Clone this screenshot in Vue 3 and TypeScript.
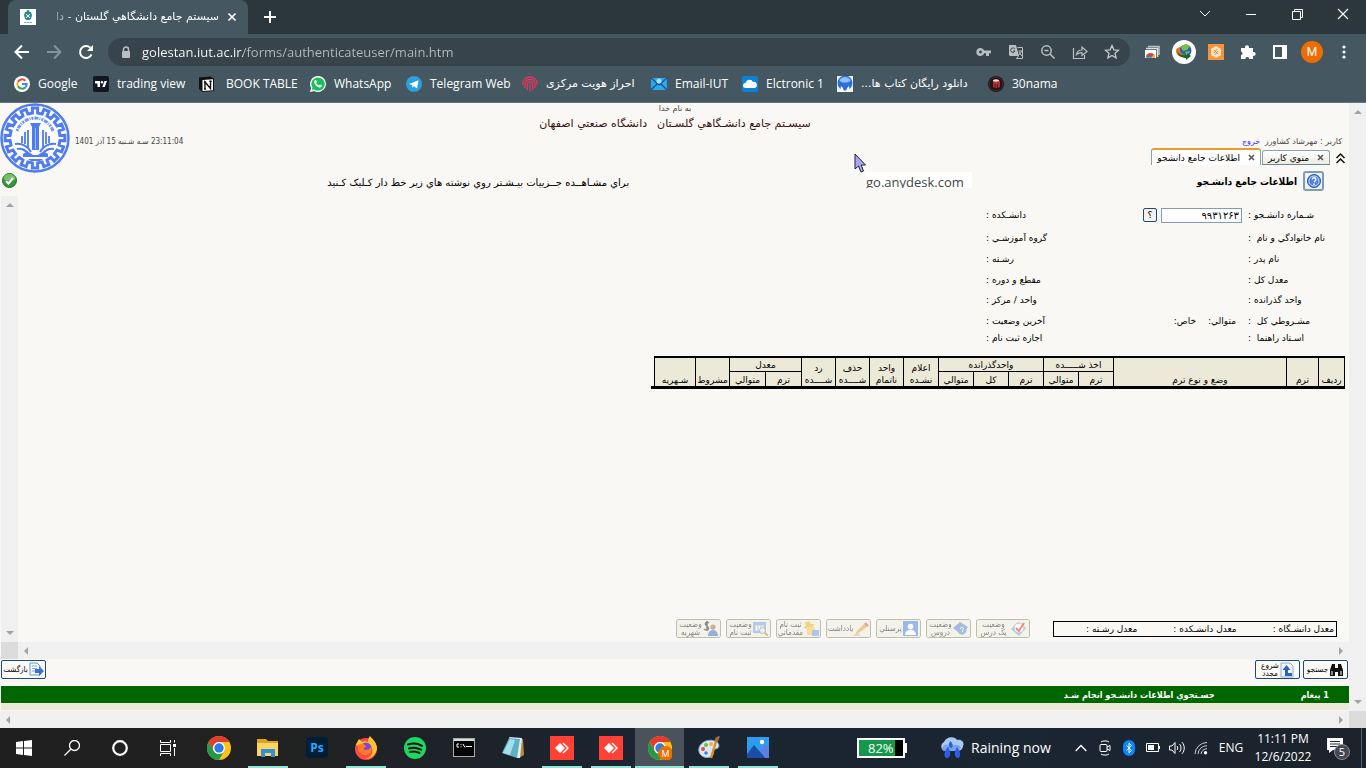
<script setup lang="ts">
import { ref } from 'vue'

interface Bookmark { id: string; label: string; rtl?: boolean }
const bookmarks: Bookmark[] = [
  { id: 'google', label: 'Google' },
  { id: 'trading', label: 'trading view' },
  { id: 'notion', label: 'BOOK TABLE' },
  { id: 'whatsapp', label: 'WhatsApp' },
  { id: 'telegram', label: 'Telegram Web' },
  { id: 'finger', label: 'احراز هویت مرکزی', rtl: true },
  { id: 'mail', label: 'Email-IUT' },
  { id: 'cloud', label: 'Elctronic 1' },
  { id: 'book', label: 'دانلود رایگان کتاب ها...', rtl: true },
  { id: 'nama', label: '30nama' },
]

const address = ref('golestan.iut.ac.ir/forms/authenticateuser/main.htm')
const studentId = ref('۹۹۳۱۲۶۳')

interface Row { a: string; b: string }
const rows: Row[] = [
  { a: 'شـماره دانشـجو :', b: 'دانشـكده :' },
  { a: 'نام خانوادگي و نام  :', b: 'گروه آموزشـي :' },
  { a: 'نام پدر :', b: 'رشـته :' },
  { a: 'معدل كل :', b: 'مقطع و دوره :' },
  { a: 'واحد گذرانده :', b: 'واحد / مركز :' },
  { a: 'مشـروطي كل  :', b: 'آخرين وضعيت :' },
  { a: 'اسـتاد راهنما  :', b: 'اجازه ثبت نام :' },
]

interface Tool { id: string; lines: string[] }
const tools: Tool[] = [
  { id: 'check', lines: ['وضعيت', 'يک درس'] },
  { id: 'question', lines: ['وضعيت', 'دروس'] },
  { id: 'person', lines: ['پرسنلي'] },
  { id: 'pencil', lines: ['يادداشت'] },
  { id: 'star', lines: ['ثبت نام', 'مقدماتي'] },
  { id: 'sheet', lines: ['وضعيت', 'ثبت نام'] },
  { id: 'money', lines: ['وضعيت', 'شهريه'] },
]

interface App { id: string; name: string; open?: boolean; active?: boolean }
const apps: App[] = [
  { id: 'chrome', name: 'Chrome' },
  { id: 'folder', name: 'Explorer', open: true },
  { id: 'ps', name: 'Photoshop' },
  { id: 'firefox', name: 'Firefox', open: true },
  { id: 'spotify', name: 'Spotify' },
  { id: 'cmd', name: 'Terminal' },
  { id: 'notepad', name: 'Notepad' },
  { id: 'anydesk', name: 'AnyDesk', open: true },
  { id: 'anydesk', name: 'AnyDesk', open: true },
  { id: 'chromeM', name: 'Chrome', open: true, active: true },
  { id: 'paint', name: 'Paint', open: true },
  { id: 'photos', name: 'Photos', open: true },
]

/* Outline of a cog wheel centred on (35, 35). */
function gear(teeth: number, outer: number, inner: number): string {
  const pts: string[] = []
  const step = (Math.PI * 2) / teeth
  for (let i = 0; i < teeth; i++) {
    const t = i * step
    const parts: [number, number][] = [[t - step * 0.27, inner], [t - step * 0.23, outer], [t + step * 0.23, outer], [t + step * 0.27, inner]]
    for (const [ang, r] of parts) {
      pts.push(`${(35 + Math.sin(ang) * r).toFixed(1)} ${(35 - Math.cos(ang) * r).toFixed(1)}`)
    }
  }
  return `M${pts.join('L')}Z`
}
const gearPath = gear(16, 30, 25)
</script>

<template>
  <div class="screen">
    <header class="chrome">
      <div class="strip">
        <div class="tab">
          <svg class="fav" viewBox="0 0 16 16"><rect width="16" height="16" fill="#fff" /><path d="M5 3h6l1 3-1 4-3 2-3-2-1-4z" fill="#2a8c93" /><path d="M6 5l2 2 2-2M6 9l2-2 2 2M5 11l3 1 3-1" stroke="#fff" fill="none" /><path d="M4 13.500h8" stroke="#7fbcc0" /><circle cx="8" cy="2.500" r="1.500" fill="#2a8c93" /></svg>
          <span class="tab-title" dir="rtl">سيستم جامع دانشگاهي گلستان - دا</span>
          <button class="plain" aria-label="Close tab"><svg width="10" height="10" viewBox="0 0 10 10"><path d="M1.500 1.500l7 7M8.500 1.500l-7 7" stroke="#fff" stroke-width="1.700" /></svg></button>
        </div>
        <button class="plain new" aria-label="New tab"><svg width="12" height="12" viewBox="0 0 12 12"><path d="M6 0v12M0 6h12" stroke="#fff" stroke-width="2" /></svg></button>
        <div class="win">
          <button class="plain" aria-label="Search tabs"><svg width="12" height="8" viewBox="0 0 12 8"><path d="M1 1l5 5 5-5" stroke="#fff" fill="none" /></svg></button>
          <button class="plain" aria-label="Minimize"><svg width="10" height="10" viewBox="0 0 10 10"><path d="M0 5.500h10" stroke="#fff" /></svg></button>
          <button class="plain" aria-label="Restore"><svg width="11" height="11" viewBox="0 0 11 11"><path d="M.5 2.500h8v8h-8zM2.500 2.500v-2h8v8h-2" stroke="#fff" fill="none" /></svg></button>
          <button class="plain" aria-label="Close"><svg width="12" height="12" viewBox="0 0 12 12"><path d="M1 1l10 10M11 1L1 11" stroke="#fff" stroke-width="1.200" /></svg></button>
        </div>
      </div>
      <div class="toolbar">
        <button class="plain" aria-label="Back"><svg width="16" height="16" viewBox="0 0 16 16"><path d="M15 8H2M8 1.500L1.500 8 8 14.500" stroke="#fff" stroke-width="2" fill="none" /></svg></button>
        <button class="plain" aria-label="Forward"><svg width="16" height="16" viewBox="0 0 16 16"><path d="M1 8h13M8 1.500L14.500 8 8 14.500" stroke="#899499" stroke-width="2" fill="none" /></svg></button>
        <button class="plain" aria-label="Reload"><svg width="16" height="16" viewBox="0 0 16 16"><path d="M13.500 10.500A6 6 0 1 1 12.300 3.800" stroke="#fff" stroke-width="2" fill="none" /><path d="M15 1v6H9z" fill="#fff" /></svg></button>
        <div class="omni">
          <svg width="10" height="13" viewBox="0 0 10 13"><rect x="1" y="5" width="8" height="7" rx="1" fill="#b9bec1" /><path d="M2.500 5V3.500a2.500 2.500 0 0 1 5 0V5" stroke="#b9bec1" stroke-width="1.500" fill="none" /></svg>
          <input v-model="address" class="url" aria-label="Address" spellcheck="false" />
          <button class="plain" aria-label="Passwords"><svg width="16" height="16" viewBox="0 0 16 16"><path d="M4.500 4a4 4 0 1 0 3.700 5.200H10V12h3V9.200h2V6.500H8.200A4 4 0 0 0 4.500 4zm0 2.500a1.400 1.400 0 1 1 0 2.900 1.400 1.400 0 0 1 0-2.900z" fill="#b9bec1" fill-rule="evenodd" /></svg></button>
          <button class="plain" aria-label="Translate"><svg width="16" height="16" viewBox="0 0 16 16"><path d="M1 1h7l3 11H2l-1-1z" fill="#b9bec1" /><path d="M9.500 3.500h5v11H8.500l2-2.500" stroke="#b9bec1" fill="none" /><path d="M6.800 5A2.200 2.200 0 1 0 7 7H5" stroke="#38444b" fill="none" /><path d="M10.500 7h4M11 11l3-4M11 8l3 4" stroke="#b9bec1" fill="none" /></svg></button>
          <button class="plain" aria-label="Zoom"><svg width="16" height="16" viewBox="0 0 16 16"><circle cx="6.500" cy="6.500" r="4.700" stroke="#b9bec1" stroke-width="1.500" fill="none" /><path d="M10 10l4.500 4.500M4.500 6.500h4" stroke="#b9bec1" stroke-width="1.500" /></svg></button>
          <button class="plain" aria-label="Share"><svg width="16" height="16" viewBox="0 0 16 16"><path d="M1.500 4v10.500h11V11M4.500 10.500c.5-3 2.500-4.500 5.500-4.500V3l5 4.500-5 4V8.700c-2.500 0-4 .3-5.500 1.800z" stroke="#b9bec1" stroke-width="1.200" fill="none" /></svg></button>
          <button class="plain" aria-label="Bookmark"><svg width="16" height="16" viewBox="0 0 16 16"><path d="M8 1.500l1.900 4.300 4.700.4-3.600 3.100 1.100 4.600L8 11.400l-4.100 2.500L5 9.300 1.400 6.200l4.700-.4z" stroke="#c4c9cb" stroke-width="1.300" fill="none" /></svg></button>
        </div>
        <div class="exts">
          <button class="plain" aria-label="Tabs extension"><svg width="16" height="16" viewBox="0 0 16 16"><path d="M4 2.500h11V11" stroke="#bfc4c6" stroke-width="1.500" fill="none" /><path d="M2 4.500h11.500V13" stroke="#dedede" stroke-width="1.500" fill="none" /><rect x="1" y="6" width="11" height="8" fill="#fff" /><path d="M2 13.500a4.500 4.500 0 0 1 9 0z" fill="#e33b2e" /><path d="M2 13.500a4.500 4.500 0 0 1 1.200-3.100L5.500 13.500z" fill="#2c9f4b" /><path d="M11 13.500a4.500 4.500 0 0 0-1.200-3.100L7.500 13.500z" fill="#f7c52c" /><path d="M4.600 13.500a1.900 1.900 0 0 1 3.800 0z" fill="#3c79e6" /></svg></button>
          <button class="plain" aria-label="Download manager"><svg width="24" height="24" viewBox="0 0 24 24"><circle cx="12" cy="12" r="12" fill="#fff" /><circle cx="13.500" cy="10.500" r="6" fill="#2c62b8" /><path d="M9 7c3-4 7-3 9-1l-3 4-4 1zM13 12l5-1-3 5z" fill="#7bc043" /><path d="M4 11c0-3 3-4 5-4-3 3 0 7 4 8l-2 2c-4 0-7-3-7-6z" fill="#e2711d" /><path d="M5 11c2 4 6 5 10 4v-2l4 3-5 4v-2c-4 0-8-2-9-7z" fill="#176822" /></svg></button>
          <button class="plain" aria-label="Wallet"><svg width="16" height="16" viewBox="0 0 16 16"><rect width="16" height="16" fill="#f79236" /><path d="M8 2l5 3v6l-5 3-5-3V5z" fill="#ffe7cd" /><path d="M6 9l3-4M7 11l3-4M6 6l4 4" stroke="#f08a30" fill="none" /></svg></button>
          <button class="plain" aria-label="Extensions"><svg width="16" height="16" viewBox="0 0 16 16"><path d="M1 4h4.200a2 2 0 1 1 3.600 0H13v4a2 2 0 1 1 0 3.800V15H9.300a2 2 0 0 0-4 0H1v-3.700a2 2 0 0 0 0-3.900z" fill="#fff" /></svg></button>
          <button class="plain" aria-label="Side panel"><svg width="14" height="14" viewBox="0 0 14 14"><path d="M1 1h12v12H1z" stroke="#fff" stroke-width="2" fill="none" /><path d="M9 1h5v12H9z" fill="#fff" /></svg></button>
          <button class="plain" aria-label="Profile"><span class="avatar">M</span></button>
          <button class="plain" aria-label="Menu"><svg width="4" height="16" viewBox="0 0 4 16"><circle cx="2" cy="3" r="1.600" fill="#fff" /><circle cx="2" cy="8" r="1.600" fill="#fff" /><circle cx="2" cy="13" r="1.600" fill="#fff" /></svg></button>
        </div>
      </div>
      <nav class="marks">
        <a v-for="m in bookmarks" :key="m.id" href="#">
          <svg width="16" height="16" viewBox="0 0 16 16">
            <g v-if="m.id === 'google'"><circle cx="8" cy="8" r="8" fill="#fff" /><g fill="none" stroke-width="2"><path d="M3.900 5.800A4.700 4.700 0 0 1 11.300 4.700" stroke="#ea4335" /><path d="M3.900 10.200a4.700 4.700 0 0 1 0-4.400" stroke="#fbbc05" /><path d="M11.200 11.400a4.700 4.700 0 0 1-7.300-1.200" stroke="#34a853" /><path d="M8 8h4.700a4.700 4.700 0 0 1-1.500 3.400" stroke="#4285f4" /></g></g>
            <g v-else-if="m.id === 'trading'"><rect width="16" height="16" rx="2" fill="#131722" /><path d="M2 5h5v6H4.500V7.500H2zM11.500 5H14l-2.300 6H9.300z" fill="#fff" /><circle cx="9" cy="6.200" r="1.200" fill="#fff" /></g>
            <g v-else-if="m.id === 'notion'"><path d="M0 1.500L11.500 .5l3.500 2V15L3.500 16 0 13z" fill="#111" /><path d="M3.500 4l10.500-.7V14.300L3.500 15z" fill="#fff" /><path d="M6 13V6l5.500 6.500V5M5 6h2M10.300 5.200h2.400M5 13h2" stroke="#111" stroke-width="1.400" fill="none" /></g>
            <g v-else-if="m.id === 'whatsapp'"><path d="M8 0a8 8 0 0 0-6.900 12L0 16l4.100-1A8 8 0 1 0 8 0z" fill="#fff" /><path d="M8 1.400a6.600 6.600 0 0 0-5.500 10.200L1.900 14l2.500-.6A6.600 6.600 0 1 0 8 1.400z" fill="#16c15b" /><path d="M5 4.300c1-.7 1.400.2 1.900 1.500L6.200 7c.6 1.300 1.500 2 2.800 2.500l1-1 2 1c0 1.200-1.300 2.200-2.800 1.900C6.500 10.700 4.700 8.700 4.200 6.500 4 5.500 4.500 4.700 5 4.300z" fill="#fff" /></g>
            <g v-else-if="m.id === 'telegram'"><circle cx="8" cy="8" r="8" fill="#2ba0dc" /><path d="M3 8l9.500-3.800L11 12.500 8 10.300l-1.500 1.500-.4-2.800z" fill="#fff" /></g>
            <g v-else-if="m.id === 'finger'" fill="none" stroke="#e8345f" stroke-width="1.300"><path d="M1 9C0 4 4 1 8 1s8 3 7 8M3 12V8.500C3 5.500 5 3.500 8 3.500s5 2 5 5V12M5.300 14V9c0-2 1-3.200 2.700-3.200S10.700 7 10.700 9v5M8 8v7.500" /></g>
            <g v-else-if="m.id === 'mail'"><rect y="2" width="16" height="12" fill="#2aa9f0" /><path d="M0 2l8 7 8-7M0 14l6-6M16 14l-6-6" stroke="#16538a" stroke-width="1.300" fill="none" /><circle cx="8" cy="5" r="2.500" fill="#b7ddf5" /></g>
            <g v-else-if="m.id === 'cloud'"><rect width="16" height="16" rx="2" fill="#0b82d6" /><path d="M3.500 12a2.500 2.500 0 0 1 0-5A4 4 0 0 1 11 6a3 3 0 0 1 1.500 6z" fill="#fff" /></g>
            <g v-else-if="m.id === 'book'"><rect width="16" height="16" fill="#e9f2fc" /><circle cx="8" cy="7" r="7.500" fill="#2c6fd8" /><path d="M2.500 4c3-4 8-4 11 0 0 3-10 4-11 0z" fill="#8ec2fa" /><path d="M3 16l1-6 2 2 1 4zM13 16l-1-6-2 2-1 4z" fill="#fff" /></g>
            <g v-else><circle cx="8" cy="8" r="8" fill="#17181a" /><circle cx="8" cy="8" r="6.800" fill="none" stroke="#5a2226" /><path d="M5 5c2-1.500 5-1.500 7 0v6c-2 1.500-5 1.500-7 0z" fill="#b82d35" /><path d="M5 5c2 1 4 1 6 0V4C9 3 7 3 5 4z" fill="#f4d9d9" /><path d="M7 8v4M9.500 8v4" stroke="#5e1218" /></g>
          </svg>
          <span :dir="m.rtl ? 'rtl' : 'ltr'" :class="{ fa: m.rtl }">{{ m.label }}</span>
        </a>
      </nav>
    </header>

    <div class="viewport">
      <main class="page" dir="rtl">
        <div class="top">
          <div class="user">کاربر : مهرشاد كشاورز <a href="#">خروج</a></div>
          <div class="heads">
            <p class="small">به نام خدا</p>
            <p class="head"><span>سيسـتم جامع دانشـگاهي گلسـتان</span><span>دانشگاه صنعتي اصفهان</span></p>
          </div>
          <div class="date">23:11:04 سـه شـنبه 15 آذر 1401</div>
          <svg class="logo" viewBox="0 0 70 70">
            <circle cx="35" cy="35" r="33.500" fill="#fff" stroke="#4f7cf0" stroke-width="2.500" />
            <path :d="gearPath" fill="#fff" stroke="#4f7cf0" stroke-width="3" />
            <path d="M17 28A19 19 0 0 1 53 28" fill="none" stroke="#6f95f6" stroke-width="3" stroke-dasharray="2 1 4 1 1 1" />
            <path d="M30 20h11l-2 4v23h-7V24z" fill="#4f7cf0" />
            <path d="M35.500 25v21" stroke="#a9c1fb" />
            <path d="M28 27v18M25 29v12M22 33v7M43 27v18M46 29v12M49 33v7" stroke="#5c87f4" stroke-width="2" />
            <path d="M15 41c8-1 13 3 16 8M17 46c6-1 9 2 12 5M56 41c-8-1-13 3-16 8M54 46c-6-1-9 2-12 5" stroke="#4f7cf0" stroke-width="2" fill="none" />
            <path d="M23 51c3-3 7-2 10 1h5c3-3 7-4 10-1v3H23zM28 56h15l-3 2h-9z" fill="#4f7cf0" />
          </svg>
          <div class="tabs">
            <button class="plain up" aria-label="Collapse"><svg width="11" height="12" viewBox="0 0 11 12"><path d="M1.500 6l4-4 4 4M1.500 11l4-4 4 4" stroke="#111" stroke-width="1.500" fill="none" /></svg></button>
            <button class="ptab"><svg width="7" height="7" viewBox="0 0 7 7"><path d="M1 1l5 5M6 1L1 6" stroke="#555" stroke-width="1.500" /></svg>منوي كاربر</button>
            <button class="ptab on"><svg width="7" height="7" viewBox="0 0 7 7"><path d="M1 1l5 5M6 1L1 6" stroke="#555" stroke-width="1.500" /></svg>اطلاعات جامع دانشجو</button>
          </div>
          <div class="titlebar">
            <div class="title">
              <button class="help" aria-label="Help"><svg width="14" height="14" viewBox="0 0 14 14"><circle cx="7" cy="7" r="6.500" fill="#4c7fdd" stroke="#2257b4" /><circle cx="7" cy="7" r="5" fill="none" stroke="#c9dcfa" /><path d="M5.300 5.500a1.800 1.800 0 1 1 2.500 1.700L7 8.300M7 9.500V11" stroke="#fff" stroke-width="1.400" fill="none" /></svg></button>
              <h1>اطلاعات جامع دانشـجو</h1>
            </div>
            <p class="hint">براي مشـاهــده جــزييات بيـشـتر روي نوشته هاي زير خط دار كـليک كـنيد</p>
            <svg class="ok" width="15" height="15" viewBox="0 0 15 15"><circle cx="7.500" cy="7.500" r="7" fill="#399339" stroke="#23702a" /><path d="M1.500 6a6 5 0 0 1 12 0c-3 2-8 2-12 0z" fill="#79bf70" /><path d="M4 8l2.500 2.500L11 5" stroke="#fff" stroke-width="2" fill="none" /></svg>
          </div>
        </div>

        <div class="frame">
          <section class="content">
            <div class="form">
              <template v-for="(r, i) in rows" :key="i">
                <label v-if="i === 0" for="sid">{{ r.a }}</label>
                <span v-else class="lab">{{ r.a }}</span>
                <div v-if="i === 0" class="val">
                  <input id="sid" v-model="studentId" />
                  <button class="q" aria-label="Lookup">؟</button>
                </div>
                <div v-else-if="i === 5" class="val sub"><span>متوالي:</span><span>خاص:</span></div>
                <div v-else></div>
                <span class="lab">{{ r.b }}</span>
              </template>
            </div>
            <div class="tablebox">
              <table>
                <colgroup><col class="c26" /><col class="c32" /><col class="c174" /><col class="c35" span="5" /><col class="c35" /><col class="c34" /><col class="c34" /><col class="c34" /><col class="c36" span="2" /><col class="c34" /><col class="c41" /></colgroup>
                <thead>
                  <tr>
                    <th rowspan="2">رديف</th>
                    <th rowspan="2">ترم</th>
                    <th rowspan="2">وضع و نوع ترم</th>
                    <th colspan="2">اخذ شـــــده</th>
                    <th colspan="3">واحدگذرانده</th>
                    <th rowspan="2">اعلام<br />نشـده</th>
                    <th rowspan="2">واحد<br />ناتمام</th>
                    <th rowspan="2">حذف<br />شــــده</th>
                    <th rowspan="2">رد<br />شــــده</th>
                    <th colspan="2">معدل</th>
                    <th rowspan="2">مشروط</th>
                    <th rowspan="2">شـهريه</th>
                  </tr>
                  <tr class="low"><th>ترم</th><th>متوالي</th><th>ترم</th><th>كل</th><th>متوالي</th><th>ترم</th><th>متوالي</th></tr>
                </thead>
              </table>
            </div>
            <div class="foot">
              <div class="avg"><span>معدل دانشـگاه :</span><span>معدل دانشـكده :</span><span>معدل رشـته :</span></div>
              <div class="tools">
                <button v-for="t in tools" :key="t.id" class="tool" disabled>
                  <svg width="15" height="15" viewBox="0 0 15 15">
                    <g v-if="t.id === 'check'"><path d="M0 8l7-7 8 6-7 8z" fill="#8ca0d8" /><circle cx="8" cy="7" r="5" fill="#fff" stroke="#99a" /><path d="M5 7l3 3 5-8" stroke="#e23b20" stroke-width="2" fill="none" /></g>
                    <g v-else-if="t.id === 'question'"><path d="M0 7l7-6 8 5-6 8z" fill="#6884cf" /><circle cx="9" cy="9" r="4.500" fill="#5f8ce0" /><path d="M7.500 8a1.500 1.500 0 1 1 2 1.200V11" stroke="#fff" fill="none" /></g>
                    <g v-else-if="t.id === 'person'"><rect width="15" height="15" fill="#4f87e0" /><circle cx="7.500" cy="5.500" r="2.800" fill="#fff" /><path d="M2 14c0-7 11-7 11 0z" fill="#fff" /></g>
                    <g v-else-if="t.id === 'pencil'"><path d="M1 14l2-4 8-8 3 3-9 7z" fill="#e0a64a" /><path d="M11 2l3 3" stroke="#c55" stroke-width="2" /><path d="M0 14h6" stroke="#999" /></g>
                    <g v-else-if="t.id === 'star'"><path d="M5 0l2 3 3 0-1 3 2 3-4 0-2 3-2-4-3-1 2-3-1-3 3 0z" fill="#efb223" /><path d="M3 6h8v8H3z" fill="#f2cd55" /><path d="M8 9h7v6H8z" fill="#6f9de3" /></g>
                    <g v-else-if="t.id === 'sheet'"><path d="M0 1h13v11H0z" fill="#7ba6e6" /><path d="M2 4h9v6H2zM5 4v6M8 4v6" fill="#fff" stroke="#7ba6e6" /><circle cx="9.500" cy="9.500" r="3" fill="#dfeafc" stroke="#888" /><path d="M12 12l3 3" stroke="#cf8c30" stroke-width="2" /></g>
                    <g v-else><path d="M6 2C3 0 1 3 4 5s1 6-3 3M4 0v10" stroke="#333" stroke-width="1.500" fill="none" /><circle cx="10" cy="6" r="2.600" fill="#a67144" /><path d="M5 15c0-8 10-8 10 0z" fill="#4575cc" /></g>
                  </svg>
                  <span><template v-for="(l, k) in t.lines" :key="k"><br v-if="k" />{{ l }}</template></span>
                </button>
              </div>
            </div>
          </section>
          <div class="vbar"><svg width="8" height="4" viewBox="0 0 8 4"><path d="M0 4l4-4 4 4z" fill="#a3a3a3" /></svg><svg width="8" height="4" viewBox="0 0 8 4"><path d="M0 0l4 4 4-4z" fill="#a3a3a3" /></svg></div>
          <div class="hbar"><svg width="4" height="8" viewBox="0 0 4 8"><path d="M0 0l4 4-4 4z" fill="#a3a3a3" /></svg><svg width="4" height="8" viewBox="0 0 4 8"><path d="M4 0L0 4l4 4z" fill="#a3a3a3" /></svg></div>
          <div class="corner"></div>
        </div>

        <div class="actions">
          <button class="act"><svg width="15" height="16" viewBox="0 0 15 16"><path d="M3 2h3v4h3V2h3l2 6v6H9v-4H6v4H1V8z" fill="#111" /><path d="M3 9v4M12 9v4" stroke="#fff" /></svg><span>جستجو</span></button>
          <button class="act"><svg width="14" height="16" viewBox="0 0 14 16"><path d="M1 1h9l3 3v11H1z" fill="#f2f7ff" stroke="#8fa9d4" /><path d="M5 14V8H2.500L6.500 3l4 5H8v3h4v3z" fill="#2b62c4" /></svg><span>شروع<br />مجدد</span></button>
          <button class="act back"><svg width="15" height="15" viewBox="0 0 15 15"><path d="M1 1h7l3 3v9H1z" fill="#f4f8ff" stroke="#6d93d8" /><path d="M3 4h5M3 6.500h5M3 9h3" stroke="#8aa9e0" /><path d="M6 7h4V4l5 5-5 5v-3H6z" fill="#3971d4" /></svg><span>بازگشت</span></button>
        </div>
        <div class="status"><b>1 پيغام</b><b>جسـتجوي اطلاعات دانشـجو انجام شـد</b></div>
        <div class="strap"></div>

        <div class="anydesk" dir="ltr">go.anydesk.com</div>
        <svg class="cursor" width="13" height="20" viewBox="0 0 13 20"><path d="M1 1v15l3.500-3 2.500 6 2.500-1L7.200 12H11.500z" fill="#a9a5f5" stroke="#22223a" /></svg>
      </main>
      <div class="vbar outer"><svg width="8" height="4" viewBox="0 0 8 4"><path d="M0 4l4-4 4 4z" fill="#a3a3a3" /></svg><svg width="8" height="4" viewBox="0 0 8 4"><path d="M0 0l4 4 4-4z" fill="#a3a3a3" /></svg></div>
      <div class="hbar outer"><svg width="4" height="8" viewBox="0 0 4 8"><path d="M4 0L0 4l4 4z" fill="#a3a3a3" /></svg><svg width="4" height="8" viewBox="0 0 4 8"><path d="M0 0l4 4-4 4z" fill="#a3a3a3" /></svg></div>
      <div class="corner"></div>
    </div>

    <footer class="taskbar">
      <button class="plain sys" aria-label="Start"><svg width="16" height="16" viewBox="0 0 16 16"><path d="M0 2l7-1v6.500H0zM8 1l8-1v7.500H8zM0 8.500h7V15l-7-1zM8 8.500h8V16l-8-1z" fill="#fff" /></svg></button>
      <button class="plain sys" aria-label="Search"><svg width="16" height="16" viewBox="0 0 16 16"><circle cx="10.500" cy="5.500" r="5" stroke="#fff" stroke-width="1.300" fill="none" /><path d="M7 9L.5 15.500" stroke="#fff" stroke-width="1.300" /></svg></button>
      <button class="plain sys" aria-label="Assistant"><svg width="16" height="16" viewBox="0 0 16 16"><circle cx="8" cy="8" r="6.800" stroke="#fff" stroke-width="2.200" fill="none" /></svg></button>
      <button class="plain sys" aria-label="Task view"><svg width="16" height="16" viewBox="0 0 16 16"><path d="M.5 0v2.500h10V0M.5 16v-2.500h10V16M.5 4.500h10v7H.5zM14.500 0v2.500M14.500 8v8" stroke="#fff" fill="none" /><path d="M13 4h3v3h-3z" fill="#fff" /></svg></button>
      <div class="apps">
        <button v-for="(a, i) in apps" :key="i" class="plain app" :class="{ open: a.open, active: a.active }" :aria-label="a.name">
          <svg width="24" height="24" viewBox="0 0 24 24">
            <g v-if="a.id === 'chrome' || a.id === 'chromeM'">
              <circle cx="12" cy="12" r="12" fill="#fbc116" /><path d="M1.600 6A12 12 0 0 1 22.400 6H12a6 6 0 0 0-5.200 9z" fill="#e33b2e" /><path d="M1.600 6a12 12 0 0 0 10.400 18l5.200-9a6 6 0 0 1-10.400 0z" fill="#229a48" /><circle cx="12" cy="12" r="6" fill="#fff" /><circle cx="12" cy="12" r="4.700" fill="#2c7cf0" />
              <g v-if="a.id === 'chromeM'"><circle cx="17.500" cy="17.500" r="7.500" fill="#ef6c00" /><text x="17.500" y="21" text-anchor="middle" font-size="9" fill="#fff" font-family="Roboto, sans-serif">M</text></g>
            </g>
            <g v-else-if="a.id === 'folder'"><path d="M1 3h9l2 2h10v4H1z" fill="#e0a11b" /><path d="M1 7h21v13H1z" fill="#fcd462" /><path d="M5 13h14v8h-4v-4H9v4H5z" fill="#2f8fd8" /></g>
            <g v-else-if="a.id === 'ps'"><rect x="1" y="1" width="22" height="21" rx="4" fill="#001e36" /><text x="12" y="16" text-anchor="middle" font-size="12" font-weight="700" fill="#31a8ff" font-family="Open Sans, sans-serif">Ps</text></g>
            <g v-else-if="a.id === 'firefox'"><circle cx="12" cy="13" r="11" fill="#ff4a44" /><path d="M2 9c1-3 2-4 3-6l3 3c2-1 4-1 6 0 0-3 1-5 2-6 2 3 7 6 7 13-2 8-8 10-11 10 6-2 8-8 5-12-3-3-9-3-11 0z" fill="#ffc32e" /><circle cx="12" cy="12" r="5.500" fill="#8146d8" /><path d="M4 9c4-3 8 0 8 2-3 0-3 3 0 3 2 0 4-1 5-3 2 5-3 9-7 8-4-1-7-5-6-10z" fill="#ff7a2d" /></g>
            <g v-else-if="a.id === 'spotify'"><circle cx="12" cy="12" r="11" fill="#1ed760" /><path d="M5 8.500c5-1.500 10-1 14 1.300M6 12.500c4-1.200 8-.8 12 1.200M7 16c3-1 6.500-.6 9.500 1" stroke="#111" stroke-width="2" stroke-linecap="round" fill="none" /></g>
            <g v-else-if="a.id === 'cmd'"><rect x="1.500" y="2.500" width="21" height="18" fill="#050505" stroke="#a9adb0" /><path d="M2 4h20" stroke="#d8dadb" stroke-width="2" /><path d="M7 8H5v3h2M9 8v0.800M9 10.500v.8M11 8l2 3.500M14 10.500h6" stroke="#fff" fill="none" /></g>
            <g v-else-if="a.id === 'notepad'"><path d="M9 2l13 1 1 16-5 3z" fill="#b88a3e" /><path d="M8 1l13 1-2 20-3 0z" fill="#e4eef0" /><path d="M8 2l11 1-3 19L1 17z" fill="#5db1c6" /><path d="M9 3l5 1-5 15-7-2z" fill="#a5dde8" /></g>
            <g v-else-if="a.id === 'anydesk'"><rect width="24" height="24" fill="#ff4136" /><path d="M5 12l5-5 5 5-5 5zM12.500 7.500l1-1L19 12l-5.500 5.500-1-1L17 12z" fill="#fff" /></g>
            <g v-else-if="a.id === 'paint'"><path d="M2 12C4 5 13 2 20 6c4 4 1 7-2 7-3 1 0 4-3 7-5 4-15 0-13-8z" fill="#d9eaf6" stroke="#7fa9c9" /><circle cx="6" cy="13" r="2" fill="#e8473a" /><circle cx="9" cy="9" r="2" fill="#73b944" /><circle cx="14" cy="8" r="2" fill="#f1b32b" /><circle cx="9" cy="17" r="1.800" fill="#3c83d8" /><path d="M20 2l-6 20" stroke="#e08a2a" stroke-width="2.500" /><path d="M19 1l4-1-2 6-3-1z" fill="#9c6b40" /></g>
            <g v-else><rect x="1" y="1" width="22" height="21" fill="#2e9bef" /><path d="M1 18l7-9 8 9 3-4 4 3v5H1z" fill="#1a4fa8" /><path d="M14 15l5-6 4 3v10h-4z" fill="#5e7fe0" /><circle cx="16" cy="6" r="2.200" fill="#fff" /></g>
          </svg>
        </button>
      </div>
      <div class="tray">
        <div class="meter"><span>82%</span></div>
        <button class="plain weather"><svg width="25" height="22" viewBox="0 0 25 22"><path d="M5 14a5 5 0 0 1 0-9C7-1 16-1 18 3c4-1 8 2 6 6 0 3-3 5-5 5z" fill="#a9c9f5" /><path d="M3 11c3-5 8-4 9-1 3-3 8-3 10 1l-3 3H5z" fill="#7aa2ea" /><path d="M9 10c3 4 3 11-1 11s-3-7 1-11zM18 10c4 5 4 11 1 11s-5-5-1-11zM11 4c4 3 3 7 1 7s-3-3-1-7z" fill="#2c5ee8" /></svg>Raining now</button>
        <button class="plain ic" aria-label="Hidden icons"><svg width="12" height="8" viewBox="0 0 12 8"><path d="M.7 7L6 1.500 11.300 7" stroke="#fff" stroke-width="1.300" fill="none" /></svg></button>
        <button class="plain ic" aria-label="Meet now"><svg width="12" height="16" viewBox="0 0 12 16"><rect x="1" y="4.500" width="7" height="7" rx="1" stroke="#fff" fill="none" /><path d="M8 7l3-1.500v5L8 9M2 2c2-1.500 6-1.500 8 0M2 14c2 1.500 6 1.500 8 0" stroke="#fff" fill="none" /></svg></button>
        <button class="plain ic" aria-label="Bluetooth"><svg width="12" height="16" viewBox="0 0 12 16"><rect width="12" height="16" rx="6" fill="#0a84ff" /><path d="M3.500 5.500l5 5L6 13V3l2.500 2.500-5 5" stroke="#fff" fill="none" /></svg></button>
        <button class="plain ic" aria-label="Battery"><svg width="15" height="10" viewBox="0 0 15 10"><path d="M.5.5h12v8H.5zM13.500 3v3" stroke="#fff" fill="none" /><path d="M2 2h6v5H2z" fill="#fff" /></svg></button>
        <button class="plain ic" aria-label="Volume"><svg width="17" height="14" viewBox="0 0 17 14"><path d="M.5 5H3l3-3.500v11L3 9H.5zM8 5c1 1.200 1 2.800 0 4M10.500 3c2 2.300 2 5.700 0 8M13 1.200c3 3.300 3 8.300 0 11.600" stroke="#fff" fill="none" /></svg></button>
        <button class="plain ic" aria-label="Network"><svg width="14" height="14" viewBox="0 0 14 14"><path d="M1 13A12 12 0 0 1 13 1.500M4 13a9 9 0 0 1 9-8.300M7 13a6 6 0 0 1 6-5.300" stroke="#ccd0d4" fill="none" /><circle cx="11.500" cy="11.800" r="1.700" fill="#fff" /></svg></button>
        <span class="lang">ENG</span>
        <div class="clock"><span>11:11 PM</span><span>12/6/2022</span></div>
        <button class="plain note" aria-label="Notifications"><svg width="26" height="26" viewBox="0 0 26 26"><path d="M2 3h16v12H8l-4 3v-3H2z" fill="#fff" /><path d="M5 6.500h10M5 9h10M5 11.500h7" stroke="#222b33" /><circle cx="17" cy="17" r="7.500" fill="#444a50" stroke="#8a8f94" /><text x="17" y="21" text-anchor="middle" font-size="11" fill="#fff" font-family="Open Sans, sans-serif">5</text></svg></button>
      </div>
    </footer>
  </div>
</template>

<style>
body { margin: 0; background: #f9f8f4; }
</style>

<style scoped>
.screen { min-height: 100vh; display: flex; flex-direction: column; overflow: hidden; font: 12px/16px "Open Sans", "DejaVu Sans", sans-serif; color: #fff; }
.screen * { box-sizing: border-box; }
svg { display: block; flex: none; }
p, h1 { margin: 0; }
button { font: inherit; color: inherit; padding: 0; cursor: default; }
.plain { border: 0; background: none; display: flex; align-items: center; justify-content: center; }
a { color: inherit; text-decoration: none; }

.chrome { background: #455760; border-bottom: 1px solid #66757d; }
.strip { height: 34px; background: #2c363d; display: flex; align-items: stretch; padding-left: 8px; }
.tab { width: 240px; background: #455760; border-radius: 8px 8px 0 0; display: flex; align-items: center; gap: 8px; padding: 0 11px 0 12px; }
.fav { width: 16px; height: 16px; }
.tab-title { flex: 1; min-width: 0; overflow: hidden; white-space: nowrap; font: 11px/18px "DejaVu Sans", sans-serif; -webkit-mask-image: linear-gradient(to right, transparent, #000 32px); mask-image: linear-gradient(to right, transparent, #000 32px); }
.new { width: 44px; }
.win { margin-left: auto; display: flex; height: 28px; }
.win button { width: 46px; }
.toolbar { height: 36px; display: flex; align-items: center; padding: 0 6px 0 14px; gap: 16px; }
.omni { flex: 1; height: 28px; border-radius: 14px; background: #38444b; display: flex; align-items: center; gap: 16px; padding: 0 10px 0 13px; margin-left: -2px; }
.url { flex: 1; min-width: 0; border: 0; padding: 0; margin-left: -5px; outline: 0; font: 13px/20px "Open Sans", sans-serif; background: linear-gradient(to right, #fff 101px, #b4babd 101px); -webkit-background-clip: text; background-clip: text; color: transparent; }
.exts { display: flex; align-items: center; margin-left: -10px; }
.exts button { width: 32px; }
.avatar { width: 22px; height: 22px; border-radius: 50%; background: #ef6c00; font: 12px/22px Roboto, sans-serif; }
.marks { height: 32px; display: grid; grid-template-columns: 79px 106px 111px 96px 116px 129px 91px 95px 151px 1fr; align-items: center; padding: 0 14px 4px; }
.marks a { display: flex; align-items: center; gap: 8px; white-space: nowrap; }
.marks a:nth-child(3) { gap: 11px; }
.marks .fa { font: 11px/16px "DejaVu Sans", sans-serif; }

.viewport { flex: 1; display: grid; grid-template: 1fr 17px / 1fr 17px; background: #f9f8f4; }
.page { position: relative; display: flex; flex-direction: column; padding-left: 1px; min-width: 0; font: 9px/14px "DejaVu Sans", sans-serif; color: #000; }
.vbar { background: #f0f0f0; display: flex; flex-direction: column; align-items: center; justify-content: space-between; padding: 7px 0; }
.hbar { background: #f0f0f0; display: flex; align-items: center; justify-content: space-between; padding: 0 6px; }
.corner { background: #dcdcdc; }

.top { display: grid; grid-template: 45px 17px 31px / 1fr auto 1fr; }
.user { grid-area: 1 / 1; align-self: end; padding-right: 7px; color: #444; font-size: 8px; line-height: 12px; }
.user a { color: #33f; margin-right: 2px; }
.heads { grid-area: 1 / 2; text-align: center; }
.small { font-size: 8px; line-height: 12px; color: #444; }
.head { display: flex; gap: 10px; font-size: 11px; line-height: 18px; color: #3a1010; }
.date { grid-area: 1 / 3; align-self: end; padding-left: 74px; text-align: left; color: #444; font-family: "DejaVu Sans Condensed", "DejaVu Sans", sans-serif; font-size: 8px; line-height: 12px; }
.logo { grid-area: 1 / 3 / 4 / 4; justify-self: end; width: 70px; height: 70px; margin-left: -1px; }
.tabs { grid-area: 2 / 1 / 3 / 3; display: flex; align-items: flex-end; gap: 1px; padding-right: 3px; }
.up { width: 11px; height: 14px; margin-left: 4px; }
.ptab { height: 15px; display: flex; align-items: center; gap: 8px; padding: 0 5px; border: 1px solid #8fa0ab; border-bottom-color: #6c8696; border-radius: 3px 3px 0 0; background: linear-gradient(#fff, #ecebe3); white-space: nowrap; }
.ptab.on { height: 17px; border-top: 2px solid #ee9a2a; border-bottom: 0; background: #fff; }
.titlebar { grid-area: 3 / 1 / 4 / 4; display: grid; grid-template-columns: 53.4% 1fr auto; align-items: center; }
.title { display: flex; align-items: center; gap: 6px; padding-right: 25px; }
.help { width: 21px; height: 20px; border: 2px solid #7d9cb8; border-radius: 3px; background: #f2f1ea; display: grid; place-items: center; }
h1 { font: 700 10px/16px "DejaVu Sans Condensed", "DejaVu Sans", sans-serif; padding-top: 2px; }
.hint { font-size: 10px; line-height: 16px; padding-top: 4px; white-space: nowrap; }
.ok { margin-left: 1px; }

.frame { flex: 1; display: grid; grid-template: 1fr 17px / 1fr 17px; }
.content { display: flex; flex-direction: column; min-width: 0; padding: 6px 4px 4px 0; }
.form { display: grid; grid-template-columns: 97px 162px 100px; grid-template-rows: 26px 20px 22px 20px 20px 22px 12px; align-items: center; white-space: nowrap; line-height: 12px; }
.form label, .lab { text-align: left; white-space: pre; }
.val { display: flex; align-items: center; padding-right: 6px; gap: 4px; }
.form input { width: 81px; height: 15px; border: 1px solid #7f9db9; background: #fff; padding: 0 2px; font: 10px/13px "DejaVu Sans", sans-serif; }
.q { width: 14px; height: 14px; border: 1px solid #1c4a78; border-radius: 2px; background: #f3f2ec; font-size: 9px; line-height: 10px; }
.val.sub { padding-right: 12px; gap: 12px; }
.tablebox { align-self: flex-start; width: 694px; border-bottom: 3px solid #000; margin-top: 12px; }
table { width: 691px; table-layout: fixed; border-collapse: collapse; background: #ece9d8; border-top: 2px solid #000; }
th { border: 1px solid #000; border-bottom-width: 0; padding: 0; font-weight: 400; line-height: 12px; height: 14px; vertical-align: bottom; white-space: nowrap; }
.low th { height: 15px; }
.c26 { width: 26px; }
.c32 { width: 32px; }
.c34 { width: 34px; }
.c35 { width: 35px; }
.c36 { width: 36px; }
.c41 { width: 41px; }
.foot { margin-top: auto; display: flex; align-items: center; padding-right: 8px; gap: 23px; }
.avg { width: 284px; height: 16px; border: 1px solid #000; display: flex; justify-content: space-between; align-items: center; padding: 0 2px 0 32px; }
.tools { display: flex; gap: 5px; }
.tool, .act { width: 45px; height: 19px; border: 1px solid #1c4a78; border-radius: 2px; background: #fbfaf6; display: flex; align-items: center; justify-content: center; gap: 1px; font: 8px/8px "DejaVu Sans Condensed", "DejaVu Sans", sans-serif; white-space: nowrap; }
.tool { border-color: #8f8d73; outline: 1px solid #fff; background: #f0efe2; opacity: .55; color: #222; }
.tool:first-child { width: 54px; gap: 4px; }

.actions { height: 27px; display: flex; align-items: flex-start; gap: 3px; padding: 1px 1px 0 0; }
.back { margin-right: auto; }
.status { height: 17px; background: #060; color: #fff; display: flex; align-items: center; padding-right: 20px; gap: 86px; }
.status b { font-family: "DejaVu Sans Condensed", "DejaVu Sans", sans-serif; }
.strap { height: 7px; background: #ece9d8; margin-bottom: 1px; }
.anydesk { position: absolute; top: 69px; left: 865px; width: 107px; height: 16px; overflow: hidden; background: #fff; color: #444; font: 13px/20px "Open Sans", sans-serif; padding-left: 1px; }
.cursor { position: absolute; left: 854px; top: 50px; }

.taskbar { height: 40px; display: flex; background: linear-gradient(90deg, #1f1f1f, #212121 20%, #1b2430 45%, #1b2633 75%, #1b222b); }
.sys { width: 48px; }
.apps { display: flex; margin-left: 2px; }
.app { width: 49px; }
.app.open { background: linear-gradient(#8fe6d8, #8fe6d8) center bottom / 40px 2px no-repeat; }
.app.active { background: linear-gradient(#8fe6d8, #8fe6d8) center bottom / 49px 2px no-repeat, #4a525c; }
.tray { margin-left: auto; display: flex; align-items: center; padding-right: 4px; font-size: 12px; }
.meter { width: 48px; height: 20px; border: 2px solid #fff; background: linear-gradient(to right, #16984a 36px, #000 36px); display: flex; align-items: center; margin-right: 34px; position: relative; font-size: 13px; padding-left: 9px; }
.meter::after { content: ""; position: absolute; right: -4px; top: 3px; width: 2px; height: 10px; background: #fff; }
.weather { gap: 7px; font-size: 14px; width: 109px; justify-content: flex-start; margin-right: 21px; white-space: nowrap; }
.ic { width: 24px; }
.lang { width: 36px; text-align: center; }
.clock { width: 68px; display: flex; flex-direction: column; align-items: center; line-height: 18px; }
.note { width: 45px; height: 40px; border-right: 1px solid #566069; padding-right: 3px; }
</style>
